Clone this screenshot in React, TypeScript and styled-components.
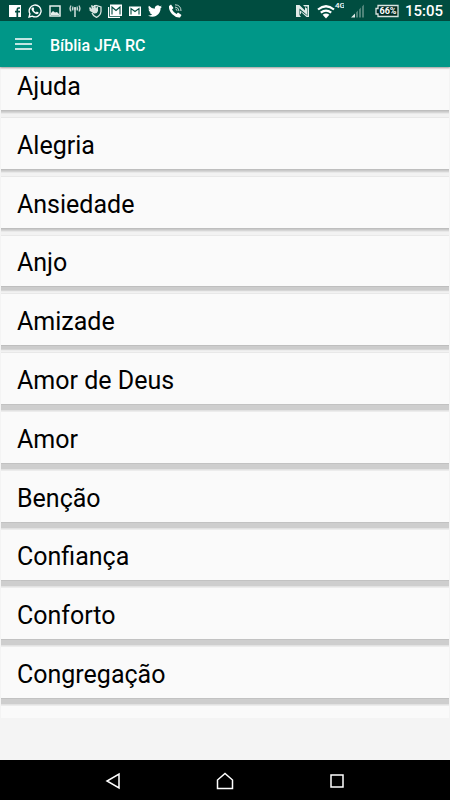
import React from "react";
import styled, { createGlobalStyle } from "styled-components";

const GlobalStyle = createGlobalStyle`
  * { box-sizing: border-box; }
  body { margin: 0; background: #f4f4f4; font-family: Roboto, "Noto Sans", sans-serif; }
  button { font: inherit; color: inherit; border: 0; padding: 0; background: none; cursor: pointer; }
`;

const Screen = styled.div`
  display: flex;
  flex-direction: column;
  height: 100vh;
  background: #f4f4f4;
`;

const StatusBar = styled.div`
  display: flex;
  flex: none;
  align-items: center;
  justify-content: space-between;
  height: 21px;
  padding: 0 7px 0 8px;
  background: #004d40;
  color: #fff;
`;

const StatusGroup = styled.div`
  display: flex;
  align-items: center;
  gap: 6px;
  svg { display: block; }
`;

const Clock = styled.time`
  font-size: 15px;
  font-weight: 500;
  line-height: 20px;
`;

const AppBar = styled.header`
  display: flex;
  flex: none;
  align-items: center;
  gap: 16px;
  height: 46px;
  padding: 0 13px;
  background: #009788;
  color: #fff;
  box-shadow: 0 1px 2px rgba(0, 0, 0, 0.4);
  z-index: 1;
`;

const MenuButton = styled.button`
  display: flex;
  width: 21px;
  height: 32px;
  align-items: center;
  justify-content: center;
`;

const Title = styled.h1`
  margin: 0;
  padding-top: 3px;
  font-size: 16px;
  font-weight: 500;
  line-height: 24px;
`;

const Topics = styled.ul`
  display: grid;
  flex: 1;
  min-height: 0;
  grid-template-rows: 51px repeat(10, minmax(0, 1fr)) 12px;
  margin: 0 1px 42px;
  padding: 0;
  list-style: none;
  overflow: hidden;
  background: #fafafa;
`;

type Tone = "light" | "medium" | "dark";

const edges: Record<Tone, string> = {
  light: "linear-gradient(#bebebe 0 1px, #cacaca 1px 2px, #d6d6d6 2px 3px, #e8e8e8 3px 4px, #f2f2f2 4px 7px, #e8e8e8 7px)",
  medium: "linear-gradient(#bebebe 0 1px, #cccccc 1px 4px, #d6d6d6 4px 5px, #ececec 5px 6px, #f2f2f2 6px 7px, #e8e8e8 7px)",
  dark: "linear-gradient(#c2c2c2 0 1px, #cecece 1px 6px, #e2e2e2 6px 7px, #ececec 7px)",
};

const Topic = styled.li<{ $tone: Tone }>`
  display: flex;
  flex-direction: column;
  justify-content: flex-end;
  min-height: 0;

  &::after {
    content: "";
    flex: none;
    height: 8px;
    background: ${({ $tone }) => edges[$tone]};
  }
`;

const TopicButton = styled.button`
  flex: none;
  height: 50px;
  padding: 4px 16px 0;
  text-align: left;
  font-size: 25px;
  line-height: 46px;
  color: #000;
`;

const NavBar = styled.nav`
  display: flex;
  flex: none;
  align-items: center;
  justify-content: center;
  gap: 88px;
  height: 40px;
  padding-top: 2px;
  background: #000;
  color: #fff;
`;

const NavButton = styled.button`
  display: flex;
  width: 24px;
  height: 32px;
  align-items: center;
  justify-content: center;
`;

const topics: { name: string; tone: Tone }[] = [
  { name: "Ajuda", tone: "light" },
  { name: "Alegria", tone: "light" },
  { name: "Ansiedade", tone: "light" },
  { name: "Anjo", tone: "medium" },
  { name: "Amizade", tone: "medium" },
  { name: "Amor de Deus", tone: "dark" },
  { name: "Amor", tone: "dark" },
  { name: "Benção", tone: "dark" },
  { name: "Confiança", tone: "dark" },
  { name: "Conforto", tone: "dark" },
  { name: "Congregação", tone: "dark" },
];

const Notifications = () => (
  <StatusGroup>
    <svg width="14" height="14" viewBox="0 0 14 14" aria-label="Facebook">
      <path fill="#fff" d="M1 1h12v12H1z" />
      <path fill="none" stroke="#004d40" strokeWidth="1.700" d="M12 4h-1.200Q9.300 4 9.300 5.500V13M7 7.700h5" />
    </svg>
    <svg width="14" height="14" viewBox="0 0 24 24" aria-label="WhatsApp">
      <path fill="none" stroke="#fff" strokeWidth="2.300" d="M1.800 22.200l1.500-5.400A10.200 10.200 0 1 1 7.300 20.800z" />
      <path fill="#fff" d="M8 6c1-.5 1.500-.2 1.800.6l.8 2c.2.600-.3 1.100-1 1.800 1 2 2.300 3.100 4.200 4 .8-.9 1.200-1.600 1.800-1.300l2.200 1.100c.7.400.2 2-.7 2.700-1.900 1.500-4.600.2-7-1.700C7.600 13 5.800 10.400 6 8.600 6.100 7.400 7 6.400 8 6z" />
    </svg>
    <svg width="14" height="14" viewBox="0 0 14 14" aria-label="Imagem">
      <path fill="none" stroke="#e5eeeb" strokeWidth="1.500" d="M2 2h10v10H2z" />
      <path fill="#e5eeeb" d="M3 11V9l2-2 2 1.500L9 8l2 2v1z" />
    </svg>
    <svg width="14" height="14" viewBox="0 0 14 14" aria-label="Antena">
      <path fill="none" stroke="#c5d7d3" strokeWidth="1.200" d="M3 1.500Q1 4.500 3 7.500M5 2.500Q4 4.500 5 6.500M11 1.500Q13 4.500 11 7.500M9 2.500Q10 4.500 9 6.500" />
      <path stroke="#c5d7d3" strokeWidth="1.600" d="M7 5v8" />
      <circle cx="7" cy="4.500" r="1.400" fill="#c5d7d3" />
    </svg>
    <svg width="14" height="14" viewBox="0 0 14 14" aria-label="Escudo">
      <path fill="none" stroke="#d7e4e0" strokeWidth="1.300" d="M4 3l4-1.500L13 3v4.500Q12.500 11.500 8.500 13.300 5 12 4 9" />
      <path fill="#d7e4e0" d="M1 4l1-1 2 2-1-3.500 1.200-.5L6 4V1h1.200L8 4.500l1-2 1 .5v4Q9 10 6 9.500L2 7l-1-1.500 1 .3z" />
    </svg>
    <svg width="14" height="14" viewBox="0 0 14 14" aria-label="Gmail">
      <path fill="none" stroke="#fff" strokeWidth="1.200" d="M.6 3v10.400H12" />
      <path fill="#fff" d="M2 .5h12v11.500H2z" />
      <path fill="none" stroke="#004d40" strokeWidth="1.100" d="M4 10.500V3L8 6.500 12 3v7.500" />
    </svg>
    <svg width="14" height="14" viewBox="0 0 14 14" aria-label="E-mail">
      <path fill="#fff" d="M1 2.500h12v9.500H1z" />
      <path fill="none" stroke="#004d40" strokeWidth="1.100" d="M3 10.500V4.500L7 7.500l4-3v6" />
    </svg>
    <svg width="14" height="14" viewBox="0 0 24 24" aria-label="Twitter">
      <path fill="#fff" d="M23.950 4.570a10 10 0 0 1-2.820.780 4.950 4.950 0 0 0 2.160-2.730 9.900 9.900 0 0 1-3.120 1.190 4.920 4.920 0 0 0-8.390 4.480A13.950 13.950 0 0 1 1.640 3.160a4.920 4.920 0 0 0 1.520 6.570 4.900 4.900 0 0 1-2.230-.610v.060a4.920 4.920 0 0 0 3.950 4.830 5 5 0 0 1-2.210.080 4.940 4.940 0 0 0 4.600 3.420A9.870 9.870 0 0 1 0 19.540a14 14 0 0 0 7.550 2.210c9.050 0 14-7.500 14-13.980l-.020-.640a9.940 9.940 0 0 0 2.420-2.560z" />
    </svg>
    <svg width="14" height="14" viewBox="0 0 14 14" aria-label="Viber">
      <path fill="#fff" d="M1 2l2-1.500L5.500 4 4 5.500Q5.500 8.500 8.500 10L10 8.500l3.500 2.500-1.500 2.500Q8 14 4 10 .5 6 1 2z" />
      <path fill="none" stroke="#c5d7d3" d="M7 .8Q13 1 13 7M7 3Q10.700 3.300 11 7M7.500 5Q9 5.300 9 6.800" />
    </svg>
  </StatusGroup>
);

const SystemStatus = () => (
  <StatusGroup>
    <svg width="14" height="14" viewBox="0 0 14 14" aria-label="NFC">
      <path fill="#e0ebe8" d="M0 1h3.500L9 6.500V3l2 1.500V11L3.500 4.500V11L5 13H0z" />
      <path fill="#e0ebe8" d="M7 1h6v12H10.500L5 8v2.500L4 9.500V6.500L11.500 12V2.500H8.500z" />
    </svg>
    <svg width="28" height="20" viewBox="0 0 28 20" aria-label="Wi-Fi 4G">
      <path fill="none" stroke="#fff" strokeWidth="2.200" d="M2 8.500Q10 2 18 8.500M4.800 11.700Q10 7.500 15.200 11.700" />
      <path fill="#fff" d="M6.600 13.700Q10 11.500 13.400 13.700L10 17.500z" />
      <text x="19" y="7" fontSize="8" fontWeight="500" fill="#fff">4G</text>
    </svg>
    <svg width="19" height="14" viewBox="0 0 19 14" aria-label="Sinal">
      <path fill="#e0ebe8" d="M1 13.500l4-4v4z" />
      <path fill="#4f8479" d="M6 8.500l2-2v7H6zM9 5.500l2-2v10H9zM12 2.500l2-2v13h-2z" />
    </svg>
    <svg width="24" height="14" viewBox="0 0 24 14" aria-label="Bateria 66%">
      <path fill="#002c23" stroke="#d6e3df" strokeWidth="1.300" d="M3 1.500h20v11H3V10H1V4.500h2z" />
      <text x="13" y="10" fontSize="9" fontWeight="700" fill="#fff" textAnchor="middle">66%</text>
    </svg>
    <Clock>15:05</Clock>
  </StatusGroup>
);

export default function App() {
  return (
    <>
      <GlobalStyle />
      <Screen>
        <StatusBar>
          <Notifications />
          <SystemStatus />
        </StatusBar>
        <AppBar>
          <MenuButton aria-label="Menu">
            <svg width="17" height="12" viewBox="0 0 17 12">
              <path stroke="#fff" strokeWidth="1.600" d="M0 1h17M0 6h17M0 11h17" />
            </svg>
          </MenuButton>
          <Title>Bíblia JFA RC</Title>
        </AppBar>
        <Topics>
          {topics.map(({ name, tone }) => (
            <Topic key={name} $tone={tone}>
              <TopicButton>{name}</TopicButton>
            </Topic>
          ))}
        </Topics>
        <NavBar>
          <NavButton aria-label="Voltar">
            <svg width="16" height="18" viewBox="0 0 16 18">
              <path fill="none" stroke="#fff" strokeWidth="1.500" d="M14 2v14L2 9z" />
            </svg>
          </NavButton>
          <NavButton aria-label="Início">
            <svg width="18" height="18" viewBox="0 0 18 18">
              <path fill="none" stroke="#fff" strokeWidth="1.500" d="M1.500 16.500V8L9 1.500 16.500 8v8.500z" />
            </svg>
          </NavButton>
          <NavButton aria-label="Recentes">
            <svg width="16" height="16" viewBox="0 0 16 16">
              <path fill="none" stroke="#fff" strokeWidth="1.500" d="M2 2h12v12H2z" />
            </svg>
          </NavButton>
        </NavBar>
      </Screen>
    </>
  );
}
